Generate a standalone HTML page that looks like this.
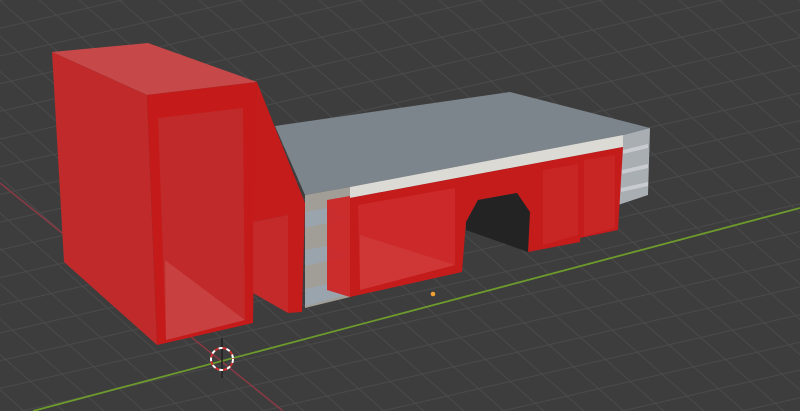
<!DOCTYPE html>
<html><head><meta charset="utf-8"><style>
html,body{margin:0;padding:0;background:#3d3d3d;overflow:hidden;width:800px;height:411px}
svg{display:block;position:absolute;left:0;top:0;overflow:hidden}
</style></head><body>
<svg width="800" height="411" viewBox="0 0 800 411" xmlns="http://www.w3.org/2000/svg">
<defs>
<pattern id="ga" width="200" height="27" patternUnits="userSpaceOnUse" patternTransform="rotate(-13)">
<line x1="0" y1="0.5" x2="200" y2="0.5" stroke="#4a4a4a" stroke-width="1"/>
</pattern>
<pattern id="gb" width="200" height="26.5" patternUnits="userSpaceOnUse" patternTransform="rotate(41.5)">
<line x1="0" y1="0.5" x2="200" y2="0.5" stroke="#4a4a4a" stroke-width="1"/>
</pattern>
</defs>
<rect width="800" height="411" fill="#3d3d3d"/>
<rect width="800" height="411" fill="url(#ga)"/>
<rect width="800" height="411" fill="url(#gb)"/>
<line x1="0" y1="183" x2="283" y2="411" stroke="#8a3a44" stroke-width="1.5"/>
<line x1="33" y1="411" x2="800" y2="208" stroke="#6d9a2c" stroke-width="1.8"/>

<polygon points="623,135 650,128 648,195 618,205" fill="#a9aeb3"/>
<polygon points="623,150 648,144 648,148 623,154" fill="#c8ccd0"/>
<polygon points="622,170 648,164 648,168 622,174" fill="#c8ccd0"/>
<polygon points="621,188 648,182 648,186 621,192" fill="#c8ccd0"/>
<polygon points="275,126 510,92 650,128 623,135 350,187 305,195" fill="#7d858c"/>
<polygon points="350,187 623,135 623,147 350,198" fill="#dcdad5"/>
<polygon points="305,195 350,187 350,297 305,308" fill="#a19e98"/>
<polygon points="305,212 327,208 350,218 305,228" fill="#9aa4ad"/>
<polygon points="305,250 327,246 350,256 305,266" fill="#9aa4ad"/>
<polygon points="305,289 327,284 350,294 305,306" fill="#9aa4ad"/>
<polygon points="327,200 350,196 350,297 327,290" fill="#cf2020" opacity="0.9"/>
<polygon points="350,198 623,147 618,230 580,238 580,242 528,252 528,212 517,193 478,200 466,222 462,272 350,297" fill="#c41b1b"/>
<polygon points="358,205 455,188 455,265 360,290" fill="#cc2a2a"/>
<polygon points="360,235 455,265 360,290" fill="#cf3a3a" opacity="0.8"/>
<polygon points="543,170 578,164 578,235 543,245" fill="#c82525"/>
<polygon points="584,160 615,155 615,228 584,236" fill="#c82525"/>
<polygon points="478,200 517,193 530,212 528,252 466,230 466,222" fill="#232323"/>

<polygon points="52,52 148,43 257,82 147,95" fill="#c74848"/>
<polygon points="52,52 147,95 157,345 64,262" fill="#c02a2a"/>
<polygon points="147,95 257,82 253,323 157,345" fill="#c51a1a"/>
<polygon points="158,118 243,108 245,320 166,340" fill="#c02a2a"/>
<polygon points="165,260 245,320 166,340" fill="#c84040"/>
<polygon points="257,82 305,203 302,312 288,313 288,215 253,222" fill="#c41b1b"/>
<polygon points="253,222 288,215 288,313 253,293" fill="#c52a2a"/>

<circle cx="433" cy="294" r="2.3" fill="#f0a030"/>
<line x1="222" y1="338" x2="222" y2="378" stroke="#222" stroke-width="1.5"/>
<circle cx="222" cy="359" r="11" fill="none" stroke="#fff" stroke-width="2" stroke-dasharray="4 4"/>
<circle cx="222" cy="359" r="11" fill="none" stroke="#d03030" stroke-width="2" stroke-dasharray="4 4" stroke-dashoffset="4"/>
</svg>
</body></html>
